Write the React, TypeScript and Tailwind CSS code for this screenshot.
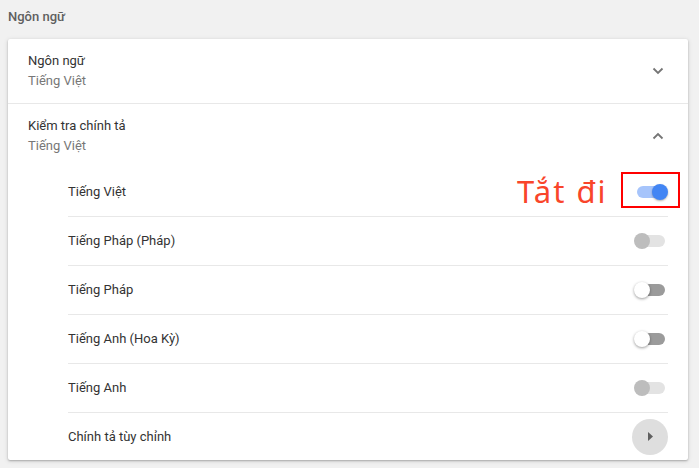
type Lang = { name: string; state: "on" | "off" | "disabled" };

const langs: Lang[] = [
  { name: "Tiếng Việt", state: "on" },
  { name: "Tiếng Pháp (Pháp)", state: "disabled" },
  { name: "Tiếng Pháp", state: "off" },
  { name: "Tiếng Anh (Hoa Kỳ)", state: "off" },
  { name: "Tiếng Anh", state: "disabled" },
];

function Chevron({ up }: { up?: boolean }) {
  return (
    <svg width="12" height="8" viewBox="0 0 12 8" className={up ? "rotate-180" : ""}>
      <path d="M1.5 1.5 L6 6 L10.5 1.5" fill="none" stroke="#757575" strokeWidth="1.8" />
    </svg>
  );
}

function Toggle({ state }: { state: Lang["state"] }) {
  const track =
    state === "on" ? "bg-[#a6c4fb]" : state === "off" ? "bg-[#9b9b9b]" : "bg-[#e3e3e3]";
  const knob =
    state === "on"
      ? "right-0 bg-[#4285f4] shadow-[0_1px_2px_rgba(0,0,0,0.3)]"
      : state === "off"
        ? "left-0 bg-white shadow-[0_1px_3px_rgba(0,0,0,0.4)]"
        : "left-0 bg-[#bdbdbd]";
  return (
    <div className="relative h-[16px] w-[34px]">
      <div className={`absolute inset-x-[3px] top-[2px] h-[12px] rounded-full ${track}`} />
      <div className={`absolute top-0 h-[16px] w-[16px] rounded-full ${knob}`} />
    </div>
  );
}

export default function App() {
  return (
    <div
      className="min-h-[468px] bg-[#f1f1f1] px-[8px] pb-[8px] text-[13px]"
      style={{ fontFamily: "Roboto, 'Noto Sans', sans-serif" }}
    >
      <div className="pt-[7px] pb-[12px] leading-[20px] font-medium text-[#5f5f5f]">Ngôn ngữ</div>

      <div className="w-[680px] rounded-[2px] bg-white shadow-[0_1px_2px_rgba(0,0,0,0.25),0_1px_4px_1px_rgba(0,0,0,0.08)]">
        <div className="flex h-[65px] items-center justify-between border-b border-[#e8e8e8] pl-[20px] pr-[24px]">
          <div className="leading-[20px]">
            <div className="text-[#333]">Ngôn ngữ</div>
            <div className="text-[#777]">Tiếng Việt</div>
          </div>
          <Chevron />
        </div>

        <div className="flex h-[64px] items-center justify-between pl-[20px] pr-[24px]">
          <div className="leading-[20px]">
            <div className="text-[#333]">Kiểm tra chính tả</div>
            <div className="text-[#777]">Tiếng Việt</div>
          </div>
          <Chevron up />
        </div>

        <div className="ml-[60px] mr-[20px]">
          {langs.map((l, i) => (
            <div
              key={l.name}
              className={`relative flex h-[48px] items-center justify-between text-[#333] ${
                i > 0 ? "box-content border-t border-[#e8e8e8]" : ""
              }`}
            >
              <span>{l.name}</span>
              <Toggle state={l.state} />
              {i === 0 && (
                <>
                  <div
                    className="absolute inset-y-0 left-[449px] flex items-center pb-[1px] text-[31px] leading-none tracking-[2px] text-[#f9452a]"
                    style={{ fontFamily: "'Noto Sans', sans-serif" }}
                  >
                    Tắt đi
                  </div>
                  <div className="absolute top-[4px] right-[-12px] h-[36px] w-[59px] border-2 border-[#f00]" />
                </>
              )}
            </div>
          ))}
          <div className="box-content flex h-[47px] items-center justify-between border-t border-[#e8e8e8] text-[#333]">
            <span>Chính tả tùy chỉnh</span>
            <div className="flex h-[36px] w-[36px] items-center justify-center rounded-full bg-[#dedede]">
              <svg width="5" height="9" viewBox="0 0 5 9">
                <path d="M0 0 L5 4.5 L0 9 Z" fill="#5f5f5f" />
              </svg>
            </div>
          </div>
        </div>
      </div>
    </div>
  );
}
